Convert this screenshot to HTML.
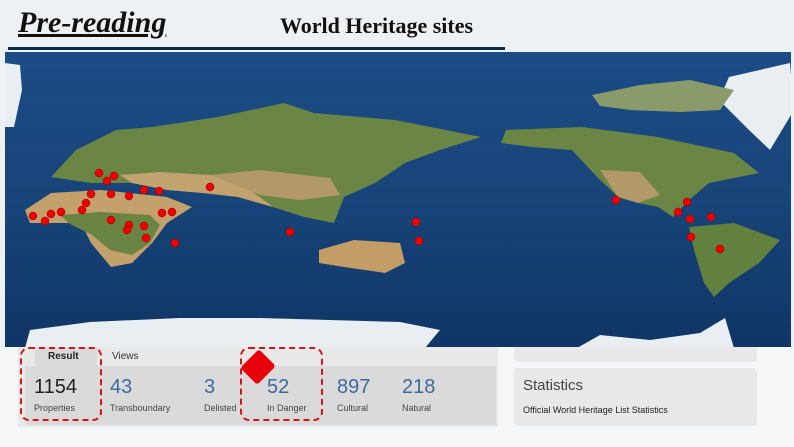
<!DOCTYPE html>
<html><head><meta charset="utf-8"><style>
body{margin:0;width:794px;height:447px;overflow:hidden;background:#eef1f4;font-family:"Liberation Sans",sans-serif;position:relative}
.abs{position:absolute}
.pre{left:18px;top:5px;font-family:"Liberation Serif",serif;font-style:italic;font-weight:bold;font-size:30px;text-decoration:underline;color:#111;letter-spacing:0px;line-height:36px}
.title{left:280px;top:13px;font-family:"Liberation Serif",serif;font-weight:bold;font-size:22px;color:#111}
.num{font-size:20px;color:#3c6aa0;top:376px}
.lab{font-size:9px;color:#444;top:403px}
.dash{border:2px dashed #d01818;border-radius:9px}
</style></head><body>
<div class="abs pre">Pre-reading</div>
<div class="abs title">World Heritage sites</div>
<div class="abs" style="left:8px;top:47px;width:497px;height:3px;background:#0d2a4a"></div>
<svg class="abs" style="left:5px;top:52px" width="786" height="296" viewBox="5 52 786 296">
<defs><linearGradient id="o" x1="0" y1="0" x2="0" y2="1"><stop offset="0" stop-color="#1c4c86"/><stop offset="0.5" stop-color="#174479"/><stop offset="1" stop-color="#103566"/></linearGradient></defs>
<rect x="5" y="52" width="786" height="296" fill="url(#o)"/>
<polygon fill="#e8eef2" points="5,63 20,65 22,90 14,127 5,127"/>
<polygon fill="#e8eef2" points="729,77 790,63 794,110 770,150 749,130 719,100"/>
<polygon fill="#8a9a6a" points="592,95 640,85 690,80 734,90 720,110 680,112 630,110 600,106"/>
<polygon fill="#6a8544" points="76,150 116,130 152,127 218,117 284,103 314,113 395,120 481,137 440,150 405,163 375,183 344,197 334,223 304,217 273,207 238,197 203,193 167,190 132,183 91,183 51,177"/>
<polygon fill="#c2a370" points="132,183 167,190 203,193 238,197 273,207 250,190 210,175 160,172 120,175"/>
<polygon fill="#b3996a" points="210,175 260,170 330,178 340,195 300,200 260,195"/>
<polygon fill="#c4a16c" points="25,210 51,193 101,190 167,197 192,207 167,223 152,243 132,263 111,267 91,243 81,223 30,223"/>
<polygon fill="#6a8543" points="60,215 100,212 150,215 160,225 150,243 132,255 110,250 92,235 70,224"/>
<polygon fill="#c49c66" points="319,250 354,240 400,243 405,263 385,273 344,267 319,263"/>
<polygon fill="#6a8544" points="506,130 582,127 658,137 734,153 759,173 709,183 689,200 673,217 658,207 638,203 618,197 597,177 572,150 532,147 501,143"/>
<polygon fill="#b39968" points="600,170 640,172 660,195 638,203 618,197"/>
<polygon fill="#62803e" points="689,227 734,223 780,240 759,263 729,283 714,297 704,283 694,250"/>
<polygon fill="#e9eef2" points="25,348 30,330 90,322 180,318 260,318 330,320 400,322 440,330 425,348"/>
<polygon fill="#e9eef2" points="577,348 600,335 650,340 700,333 725,318 734,348"/>
<g fill="#e00" stroke="#900" stroke-width="0.5">
<circle cx="99" cy="173" r="4"/><circle cx="114" cy="176" r="4"/><circle cx="107" cy="181" r="4"/><circle cx="91" cy="194" r="4"/><circle cx="111" cy="194" r="4"/><circle cx="129" cy="196" r="4"/><circle cx="144" cy="190" r="4"/><circle cx="159" cy="191" r="4"/><circle cx="86" cy="203" r="4"/><circle cx="82" cy="210" r="4"/><circle cx="61" cy="212" r="4"/><circle cx="51" cy="214" r="4"/><circle cx="33" cy="216" r="4"/><circle cx="45" cy="221" r="4"/><circle cx="111" cy="220" r="4"/><circle cx="129" cy="225" r="4"/><circle cx="144" cy="226" r="4"/><circle cx="127" cy="230" r="4"/><circle cx="146" cy="238" r="4"/><circle cx="175" cy="243" r="4"/><circle cx="162" cy="213" r="4"/><circle cx="172" cy="212" r="4"/><circle cx="210" cy="187" r="4"/><circle cx="290" cy="232" r="4"/><circle cx="416" cy="222" r="4"/><circle cx="419" cy="241" r="4"/><circle cx="616" cy="200" r="4"/><circle cx="687" cy="202" r="4"/><circle cx="678" cy="212" r="4"/><circle cx="690" cy="219" r="4"/><circle cx="711" cy="217" r="4"/><circle cx="691" cy="237" r="4"/><circle cx="720" cy="249" r="4"/>
</g>
</svg>
<div class="abs" style="left:0;top:347px;width:794px;height:100px;background:#f4f6f8"></div>
<div class="abs" style="left:18px;top:347px;width:480px;height:80px;background:#e8e8e8"></div>
<div class="abs" style="left:25px;top:366px;width:471px;height:59px;background:#dadada"></div>
<div class="abs" style="left:35px;top:347px;width:62px;height:19px;background:#dadada"></div>
<div class="abs" style="left:48px;top:351px;font-size:10px;font-weight:bold;color:#222">Result</div>
<div class="abs" style="left:112px;top:351px;font-size:10px;color:#333">Views</div>
<div class="abs num" style="left:34px;color:#222">1154</div><div class="abs lab" style="left:34px">Properties</div>
<div class="abs num" style="left:110px">43</div><div class="abs lab" style="left:110px">Transboundary</div>
<div class="abs num" style="left:204px">3</div><div class="abs lab" style="left:204px">Delisted</div>
<div class="abs num" style="left:267px">52</div><div class="abs lab" style="left:267px">In Danger</div>
<div class="abs num" style="left:337px">897</div><div class="abs lab" style="left:337px">Cultural</div>
<div class="abs num" style="left:402px">218</div><div class="abs lab" style="left:402px">Natural</div>
<div class="abs dash" style="left:20px;top:347px;width:78px;height:70px"></div>
<div class="abs dash" style="left:240px;top:347px;width:79px;height:70px"></div>
<div class="abs" style="left:246px;top:355px;width:24px;height:24px;background:#e8000a;transform:rotate(45deg) scaleY(1.1);border-radius:3px"></div>
<div class="abs" style="left:514px;top:347px;width:243px;height:15px;background:#e8e8e8;border-radius:0 0 4px 4px"></div>
<div class="abs" style="left:514px;top:368px;width:243px;height:58px;background:#e8e8e8;border-radius:4px"></div>
<div class="abs" style="left:523px;top:377px;font-size:15px;color:#444">Statistics</div>
<div class="abs" style="left:523px;top:405px;font-size:9px;color:#222">Official World Heritage List Statistics</div>
</body></html>
